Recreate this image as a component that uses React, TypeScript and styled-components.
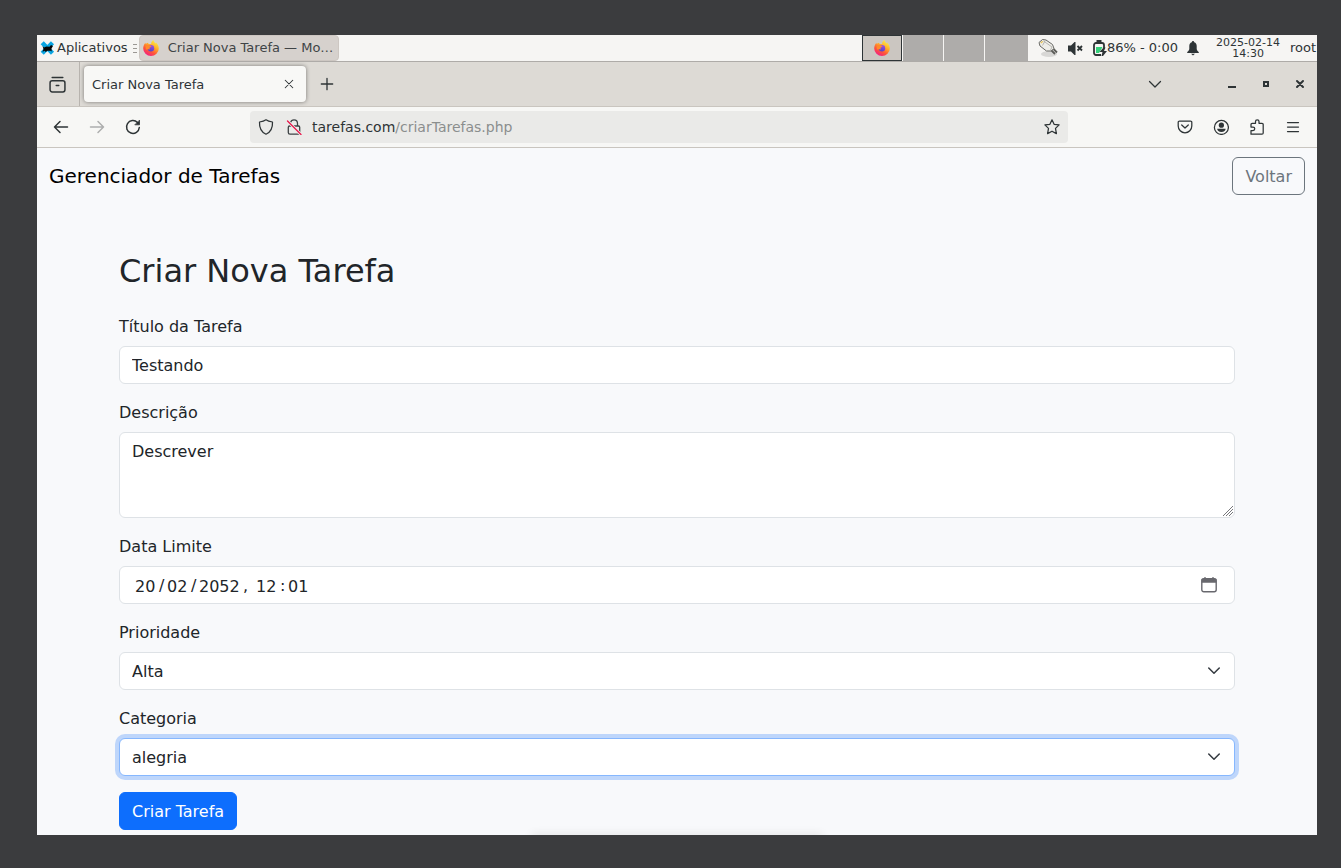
import React, { useState } from "react";
import styled, { createGlobalStyle, css } from "styled-components";

const sans = `"DejaVu Sans", sans-serif`;

const GlobalStyle = createGlobalStyle`
  *, *::before, *::after { box-sizing: border-box; }
  body { margin: 0; background: #3b3c3e; font-family: ${sans}; }
  button, input, select, textarea { font: inherit; color: inherit; margin: 0; }
  svg { display: block; flex: none; }
`;

const Desktop = styled.div`
  display: flex;
  min-height: 100vh;
  padding: 35px 24px 33px 37px;
`;

const Screen = styled.div`
  position: relative;
  flex: 1;
  min-width: 0;
  display: flex;
  flex-direction: column;
  overflow: hidden;
  background: #f8f9fb;
`;

/* ---------- desktop panel ---------- */

const Panel = styled.header`
  display: flex;
  align-items: stretch;
  height: 27px;
  background: #f6f5f3;
  border-bottom: 1px solid #aeaba8;
  color: #2e3436;
  font-size: 13px;
  line-height: 26px;
  white-space: nowrap;
`;

const PlainButton = styled.button`
  display: flex;
  align-items: center;
  justify-content: center;
  padding: 0;
  border: 0;
  background: none;
`;

const AppsButton = styled(PlainButton)`
  gap: 2px;
  padding-left: 3px;
`;

const Handle = styled.span`
  display: flex;
  flex-direction: column;
  justify-content: center;
  gap: 3px;
  width: 4px;
  margin: 0 2px 0 5px;

  i { height: 1px; background: #9b9894; }
`;

const TaskButton = styled(PlainButton)`
  justify-content: flex-start;
  gap: 9px;
  width: 200px;
  padding-left: 3px;
  border: 1px solid #cdc7c2;
  border-radius: 4px;
  background: #d6d1cd;
  color: #3f4446;
`;

const Pager = styled.div`
  display: grid;
  grid-template-columns: repeat(3, 40px) 1fr;
  gap: 1px;
  width: 166px;
  margin-left: auto;
`;

const Workspace = styled(PlainButton)<{ $active?: boolean }>`
  background: #aeacaa;
  ${(p) => p.$active && css`
    background: #cbc6c1;
    border: 1px solid #2e3436;
  `}
`;

const Tray = styled.div`
  display: flex;
  align-items: center;
  width: 289px;
  padding-left: 10px;
  gap: 9px;
`;

const Battery = styled.span`
  display: flex;
  align-items: center;
  margin-left: 1px;
`;

const Clock = styled.time`
  width: 76px;
  margin-right: -3px;
  padding-left: 4px;
  font-size: 11px;
  line-height: 11px;
  text-align: center;
  white-space: normal;
`;

/* ---------- browser ---------- */

const TabBar = styled.div`
  display: flex;
  align-items: center;
  height: 45px;
  background: #dddad5;
  border-bottom: 1px solid #c9c5bf;
  color: #2e3436;
`;

const TabsMenu = styled(PlainButton)`
  width: 43px;
  height: 44px;
  padding-right: 2px;
  border-right: 1px solid #b8b4af;
`;

const Tab = styled.div`
  display: flex;
  align-items: center;
  justify-content: space-between;
  width: 222px;
  height: 36px;
  margin: 0 14px 0 4px;
  padding: 0 11px 0 8px;
  border-radius: 4px;
  background: #f8f8f6;
  box-shadow: 0 0 4px rgba(0, 0, 0, 0.45);
  font-size: 13px;
`;

const WindowControls = styled.div`
  display: flex;
  align-items: center;
  gap: 18px;
  margin-left: auto;
  padding-right: 9px;
`;

const AllTabs = styled(PlainButton)`
  margin-right: 43px;
`;

const Toolbar = styled.div`
  display: flex;
  align-items: center;
  height: 41px;
  padding: 0 16px;
  background: #f7f7f5;
  border-bottom: 1px solid #c9c5bf;
  color: #2e3436;
`;

const NavGroup = styled.div`
  display: flex;
  gap: 20px;
  width: 197px;
`;

const UrlBar = styled.div`
  display: flex;
  align-items: center;
  flex: 1;
  height: 32px;
  max-width: 818px;
  padding: 0 8px;
  border-radius: 4px;
  background: #eaeae8;
`;

const Url = styled.a`
  flex: 1;
  padding-left: 10px;
  color: #2e3436;
  font-size: 14px;
  text-decoration: none;

  span { color: #8b8e8e; }
`;

const ActionGroup = styled(NavGroup)`
  width: auto;
  margin-left: auto;
`;

/* ---------- page ---------- */

const Navbar = styled.nav`
  display: flex;
  align-items: center;
  justify-content: space-between;
  height: 56px;
  padding: 0 12px;
`;

const Brand = styled.a`
  color: #000;
  font-size: 20px;
  line-height: 30px;
  text-decoration: none;
`;

const Button = styled.button<{ $primary?: boolean }>`
  height: 38px;
  padding: 2px 12px 0;
  border: 1px solid ${(p) => (p.$primary ? "#0d6efd" : "#6c757d")};
  border-radius: 6px;
  background: ${(p) => (p.$primary ? "#0d6efd" : "transparent")};
  color: ${(p) => (p.$primary ? "#fff" : "#6c757d")};
  font-size: 16px;
  line-height: 24px;
`;

const Container = styled.main`
  width: 100%;
  max-width: 1140px;
  margin: 48px auto 0;
  padding: 0 12px 5px;
  color: #212529;
`;

const Title = styled.h2`
  margin: 0 0 24px;
  font-size: 32px;
  font-weight: 400;
  line-height: 38px;
`;

const Group = styled.div`
  margin-bottom: 16px;
`;

const Label = styled.label`
  display: block;
  width: fit-content;
  margin-bottom: 6px;
  font-size: 16px;
  line-height: 26px;
`;

const field = css`
  display: block;
  width: 100%;
  height: 38px;
  padding: 6px 12px;
  border: 1px solid #dee2e6;
  border-radius: 6px;
  outline: 0;
  background: #fff;
  font-size: 16px;
  line-height: 24px;
`;

const Input = styled.input`${field}`;

const TextArea = styled.textarea`
  ${field}
  height: 86px;
  padding-top: 7px;
  resize: vertical;

  &::-webkit-resizer { display: none; }
`;

const Select = styled.select<{ $focused?: boolean }>`
  ${field}
  padding: 7px 12px 5px;
  appearance: none;
  ${(p) => p.$focused && css`
    border-color: #86b7fe;
    box-shadow: 0 0 0 4px #bed6fb;
  `}
`;

const Holder = styled.div`
  position: relative;
`;

const Overlay = styled.span<{ $right: number; $bottom: number }>`
  position: absolute;
  right: ${(p) => p.$right}px;
  bottom: ${(p) => p.$bottom}px;
  pointer-events: none;
`;

const DateField = styled.div`
  ${field}
  display: flex;
  align-items: center;
  padding: 0 17px 0 15px;
`;

const Segment = styled.input<{ $wide?: boolean }>`
  width: ${(p) => (p.$wide ? 42 : 21)}px;
  height: 26px;
  padding: 2px 0 0;
  border: 0;
  outline: 0;
  background: none;
`;

const Separator = styled.span<{ $wide?: boolean }>`
  width: ${(p) => (p.$wide ? 15 : 11)}px;
  padding: 2px 0 0 ${(p) => (p.$wide ? 2 : 3)}px;
`;

const CalendarButton = styled(PlainButton)`
  margin-left: auto;
  color: #68686e;
`;

const DockShadow = styled.div`
  position: absolute;
  left: 50%;
  bottom: -6px;
  width: 290px;
  height: 6px;
  transform: translateX(-50%);
  box-shadow: 0 0 10px rgba(60, 50, 30, 0.14);
`;

/* ---------- icons ---------- */

type IconProps = { size?: number; children: React.ReactNode; width?: number; color?: string };

const Icon = ({ size = 16, width = 1.25, color = "currentColor", children }: IconProps) => (
  <svg width={size} height={size} viewBox="0 0 16 16" fill="none" stroke={color}
    strokeWidth={width} strokeLinecap="round" strokeLinejoin="round" aria-hidden="true">
    {children}
  </svg>
);

const FirefoxLogo = ({ id }: { id: string }) => (
  <svg width="16" height="16" viewBox="0 0 16 16" aria-hidden="true">
    <defs>
      <linearGradient id={`${id}-body`} x1="0.8" y1="0.05" x2="0.25" y2="1">
        <stop offset="0" stopColor="#fff04a" />
        <stop offset="0.35" stopColor="#ffb02a" />
        <stop offset="0.65" stopColor="#ff5a36" />
        <stop offset="1" stopColor="#f0188a" />
      </linearGradient>
      <linearGradient id={`${id}-core`} x1="0.7" y1="0" x2="0.4" y2="1">
        <stop offset="0" stopColor="#a04fe0" />
        <stop offset="1" stopColor="#5047c8" />
      </linearGradient>
    </defs>
    <path fill={`url(#${id}-body)`} d="M10.5 0c.2 1.7 1.2 2.3 2.2 3.4l.3-.9c1.6 1.4 2.8 3.6 2.8 6A7.8 7.500 0 0 1 .2 8.500C.2 6.500 1 4.300 2.400 2.700l.3 1.400C3.400 3.500 4 3 5 2.800L5.600 4h2.600C8 2.400 9 .8 10.500 0z" />
    <circle cx="8" cy="8.300" r="3.200" fill={`url(#${id}-core)`} />
    <path fill="#ff8a2b" d="M2.600 6c1.300-1.200 3-1.200 4.200-.5 1.200.2 1.700.5 1.600 1-.3.7-1.300.7-1.700 1.100-.3.500-.2 1.300.5 1.800-1.400 0-2.700-.5-4.300.4z" />
  </svg>
);

const XfceLogo = () => (
  <svg width="15" height="16" viewBox="0 0 15 16" aria-hidden="true">
    <path d="M2.200 2.800L12.500 13.300M12.500 2.800L2.200 13.300" stroke="#0aa5e2" strokeWidth="4.400" fill="none" />
    <path d="M2.500 6l1.500 1.500L6.500 6.500l3 .3L11 5l2 1-1.500 2.500.2 3-1.700-1-1 .5-1-.6-2.500 1.600-.6-1.200-2.400 1 1-2.500z" fill="#050505" />
  </svg>
);

const PlugIcon = () => (
  <svg width="20" height="20" viewBox="0 0 20 20" aria-hidden="true">
    <ellipse cx="11" cy="16" rx="8" ry="3" fill="#000" opacity="0.12" />
    <path d="M13 12l4 4M15.500 11l3.500 3.500" stroke="#5c5c58" strokeWidth="1.800" />
    <path d="M1 4.500L4.500 1.500 8 2l6.500 4.500 1.500 4-3 2.500-4.500 0L2 8z" fill="#eeede9" stroke="#686864" />
    <path d="M7 3l-2.500 4.500M5.500 3L14 9l-1.500 3" stroke="#a9a8a3" strokeWidth="0.800" fill="none" />
    <path d="M2.200 4.800l2-1.900 1.200.6-2 2z" fill="#e7c35a" />
  </svg>
);

const MutedIcon = () => (
  <svg width="16" height="16" viewBox="0 0 16 16" aria-hidden="true">
    <path d="M1 5.500h3L7.500 2h1v13h-1L4 11.500H1z" fill="#2e3436" />
    <path d="M10.500 6l4.500 4.500M15 6l-4.500 4.500" stroke="#2e3436" strokeWidth="1.800" />
  </svg>
);

const BatteryIcon = () => (
  <svg width="14" height="16" viewBox="0 0 14 16" aria-hidden="true">
    <path d="M8 15H3a2 2 0 0 1-2-2V5a2 2 0 0 1 2-2h6a2 2 0 0 1 2 2v3" fill="none" stroke="#2e3436" strokeWidth="1.800" />
    <path d="M3.500 0h5v2.500h-5z" fill="#2e3436" />
    <path d="M3 7h6.500L6 13H3z" fill="#33d17a" />
    <path d="M10.500 7.500L6.500 12h3L8.500 16h1.500l4-5h-3l1.500-3.500z" fill="#2e3436" />
  </svg>
);

const BellIcon = () => (
  <svg width="12" height="15" viewBox="0 0 12 15" aria-hidden="true">
    <path d="M6 0a1.200 1.200 0 0 1 1.200 1.200C9 1.800 9.700 3.200 9.700 5v3c0 1.500 1.800 2.200 2.300 4H0c.5-1.800 2.300-2.500 2.300-4V5c0-1.800.7-3.200 2.500-3.800A1.200 1.200 0 0 1 6 0zM4 12.800h4L6 14.500z" fill="#2e3436" />
  </svg>
);

const Chevron = () => (
  <Icon size={12} width={2} color="#343a40"><path d="m1 4 7 7 7-7" /></Icon>
);

/* ---------- app ---------- */

export default function App() {
  const [title, setTitle] = useState("Testando");
  const [description, setDescription] = useState("Descrever");

  return (
    <>
      <GlobalStyle />
      <Desktop>
        <Screen>
          <Panel>
            <AppsButton><XfceLogo />Aplicativos</AppsButton>
            <Handle><i /><i /><i /></Handle>
            <TaskButton><FirefoxLogo id="task" />Criar Nova Tarefa — Mo…</TaskButton>
            <Pager>
              <Workspace $active aria-label="Área 1"><FirefoxLogo id="pager" /></Workspace>
              <Workspace aria-label="Área 2" />
              <Workspace aria-label="Área 3" />
              <Workspace aria-label="Área 4" />
            </Pager>
            <Tray>
              <PlugIcon />
              <MutedIcon />
              <Battery><BatteryIcon />86% - 0:00</Battery>
              <BellIcon />
              <Clock>2025-02-14 14:30</Clock>
              <span>root</span>
            </Tray>
          </Panel>

          <TabBar>
            <TabsMenu aria-label="Abas recentes">
              <Icon size={17} width={1.4}>
                <rect x="1" y="4.500" width="14" height="10.500" rx="2" />
                <path d="M3 1.500h10M6.800 9h2.400" />
              </Icon>
            </TabsMenu>
            <Tab>
              Criar Nova Tarefa
              <PlainButton aria-label="Fechar aba">
                <Icon size={12} width={1.4}><path d="M3 3l10 10M13 3L3 13" /></Icon>
              </PlainButton>
            </Tab>
            <PlainButton aria-label="Nova aba">
              <Icon size={14} width={1.5}><path d="M8 1.500v13M1.500 8h13" /></Icon>
            </PlainButton>
            <WindowControls>
              <AllTabs aria-label="Listar abas">
                <Icon><path d="M2.500 5.500L8 11l5.500-5.500" /></Icon>
              </AllTabs>
              <PlainButton aria-label="Minimizar">
                <Icon><path d="M4 11h8" strokeWidth="2" strokeLinecap="butt" /></Icon>
              </PlainButton>
              <PlainButton aria-label="Maximizar">
                <Icon><path d="M6 6h4v4H6z" strokeWidth="2" strokeLinejoin="miter" /></Icon>
              </PlainButton>
              <PlainButton aria-label="Fechar">
                <Icon><path d="M5 5l6 6M11 5l-6 6" strokeWidth="2" /></Icon>
              </PlainButton>
            </WindowControls>
          </TabBar>

          <Toolbar>
            <NavGroup>
              <PlainButton aria-label="Voltar">
                <Icon width={1.5}><path d="M14.500 8h-13M7 2.500L1.500 8 7 13.500" /></Icon>
              </PlainButton>
              <PlainButton aria-label="Avançar">
                <Icon width={1.5} color="#adaeae"><path d="M1.500 8h13M9 2.500L14.500 8 9 13.500" /></Icon>
              </PlainButton>
              <PlainButton aria-label="Recarregar">
                <Icon width={1.5}>
                  <path d="M14.300 8.500A6.400 6.400 0 1 1 12.500 3.500" />
                  <path d="M14.500 1.500v4.300h-4.300z" fill="currentColor" strokeWidth="0.8" />
                </Icon>
              </PlainButton>
            </NavGroup>
            <UrlBar>
              <Icon><path d="M8 .8c2 1.500 4.200 1.900 6.500 2.200C14.800 9 13 13 8 15.200 3 13 1.200 9 1.500 3 3.800 2.700 6 2.300 8 .8z" /></Icon>
              <PlainButton aria-label="Conexão não segura">
                <svg width="28" height="16" viewBox="-12 0 28 16" fill="none" strokeLinecap="round" aria-hidden="true">
                  <path d="M4.500 3.500C5 1.800 6.300.8 8 .8c2 0 3.500 1.600 3.500 3.700V7M3 7h9.500a1.200 1.200 0 0 1 1.200 1.200v5M12.800 15.200H4A1.700 1.700 0 0 1 2.300 13.500V8.500C2.300 7.500 2.800 7 3.500 7M5 7V6" stroke="#3d4244" strokeWidth="1.3" />
                  <path d="M1.500 2l13.500 13.500" stroke="#eceae8" strokeWidth="3" />
                  <path d="M1.500 2l13.500 13.500" stroke="#e8194c" strokeWidth="1.3" />
                </svg>
              </PlainButton>
              <Url href="#">tarefas.com<span>/criarTarefas.php</span></Url>
              <PlainButton aria-label="Favoritar">
                <Icon><path d="M8 .8l2.100 4.500 5 .6-3.600 3.500.9 5.200L8 12.200l-4.400 2.400.9-5.200L.9 5.900l5-.6z" /></Icon>
              </PlainButton>
            </UrlBar>
            <ActionGroup>
              <PlainButton aria-label="Pocket">
                <Icon><path d="M2.500 2h11a1.300 1.300 0 0 1 1.300 1.300V7a6.800 6.800 0 0 1-13.600 0V3.300A1.300 1.300 0 0 1 2.500 2zM4.700 6L8 9l3.300-3" /></Icon>
              </PlainButton>
              <PlainButton aria-label="Conta">
                <Icon>
                  <circle cx="8.400" cy="8.400" r="7" />
                  <circle cx="8.400" cy="6.200" r="2.600" fill="currentColor" stroke="none" />
                  <path d="M4.200 9.800h8.400c0 2-1.500 3.200-4.200 3.200s-4.200-1.200-4.200-3.200z" fill="currentColor" stroke="none" />
                </Icon>
              </PlainButton>
              <PlainButton aria-label="Extensões">
                <Icon><path d="M2 15.200V11.500h2a1.700 1.700 0 0 0 0-3.500H2V5.500A1.200 1.200 0 0 1 3.200 4.300H6.500V2.500a1.700 1.700 0 0 1 3.500 0V4.300h3a1.200 1.200 0 0 1 1.200 1.200v8.500a1.200 1.200 0 0 1-1.200 1.200z" /></Icon>
              </PlainButton>
              <PlainButton aria-label="Menu">
                <Icon><path d="M2.500 3.500h11M2.500 8h11M2.500 12.500h11" /></Icon>
              </PlainButton>
            </ActionGroup>
          </Toolbar>

          <Navbar>
            <Brand href="#">Gerenciador de Tarefas</Brand>
            <Button type="button">Voltar</Button>
          </Navbar>

          <Container>
            <Title>Criar Nova Tarefa</Title>
            <form onSubmit={(e) => e.preventDefault()}>
              <Group>
                <Label htmlFor="titulo">Título da Tarefa</Label>
                <Input id="titulo" value={title} onChange={(e) => setTitle(e.target.value)} />
              </Group>
              <Group>
                <Label htmlFor="descricao">Descrição</Label>
                <Holder>
                  <TextArea id="descricao" value={description} onChange={(e) => setDescription(e.target.value)} />
                  <Overlay $right={2} $bottom={2}>
                    <svg width="10" height="10" viewBox="0 0 10 10" stroke="#77777b" aria-hidden="true">
                      <path d="M0 10L10 0M3 10l7-7M6 10l4-4" />
                    </svg>
                  </Overlay>
                </Holder>
              </Group>
              <Group>
                <Label htmlFor="dia">Data Limite</Label>
                <DateField>
                  <Segment id="dia" aria-label="Dia" defaultValue="20" />
                  <Separator>/</Separator>
                  <Segment aria-label="Mês" defaultValue="02" />
                  <Separator>/</Separator>
                  <Segment $wide aria-label="Ano" defaultValue="2052" />
                  <Separator $wide>,</Separator>
                  <Segment aria-label="Hora" defaultValue="12" />
                  <Separator>:</Separator>
                  <Segment aria-label="Minuto" defaultValue="01" />
                  <CalendarButton type="button" aria-label="Abrir calendário">
                    <Icon width={1.4}>
                      <rect x="0.8" y="1.800" width="14.400" height="13" rx="2" />
                      <path d="M1.200 2.500h13.600v2.500H1.200z" fill="currentColor" />
                      <path d="M4 .6v2M12 .6v2" />
                    </Icon>
                  </CalendarButton>
                </DateField>
              </Group>
              <Group>
                <Label htmlFor="prioridade">Prioridade</Label>
                <Holder>
                  <Select id="prioridade" defaultValue="Alta">
                    <option>Alta</option>
                  </Select>
                  <Overlay $right={15} $bottom={13}><Chevron /></Overlay>
                </Holder>
              </Group>
              <Group>
                <Label htmlFor="categoria">Categoria</Label>
                <Holder>
                  <Select id="categoria" $focused defaultValue="alegria">
                    <option>alegria</option>
                  </Select>
                  <Overlay $right={15} $bottom={13}><Chevron /></Overlay>
                </Holder>
              </Group>
              <Button $primary type="submit">Criar Tarefa</Button>
            </form>
          </Container>
          <DockShadow />
        </Screen>
      </Desktop>
    </>
  );
}
